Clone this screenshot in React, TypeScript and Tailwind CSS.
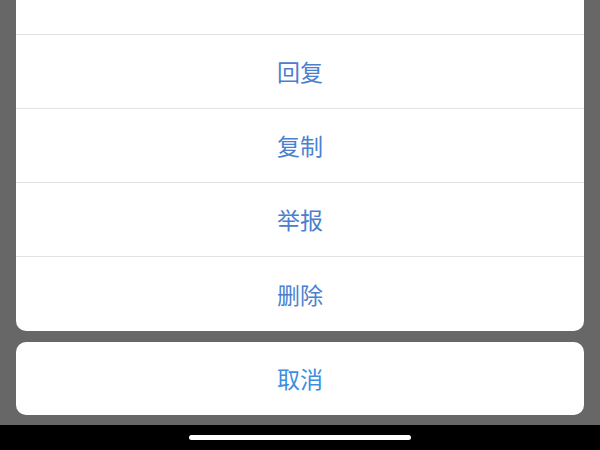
import React from "react";

const actions = ["回复", "复制", "举报", "删除"];

const ActionRow = ({ label, last }: { label: string; last?: boolean }) => {
  return (
    <button
      type="button"
      className={`flex items-center justify-center border-t border-[#e2e2e2] text-[23px] text-[#4a80cf] ${
        last ? "h-[75px]" : "h-[74px]"
      }`}
    >
      {label}
    </button>
  );
};

export default function App() {
  return (
    <div
      className="flex h-[450px] w-[600px] flex-col overflow-hidden bg-[#676767]"
      style={{ fontFamily: '"Noto Sans CJK SC", "Noto Sans", sans-serif' }}
    >
      <div className="flex flex-1 flex-col px-4">
        {/* action sheet, its first row scrolled past the top */}
        <div className="-mt-[40px] flex flex-col rounded-b-[10px] bg-white">
          <div className="h-[74px]" />
          {actions.map((a, i) => (
            <ActionRow key={a} label={a} last={i === actions.length - 1} />
          ))}
        </div>
        <button
          type="button"
          className="mt-[11px] flex h-[73px] items-center justify-center rounded-[10px] bg-white text-[23px] text-[#3d8de0]"
        >
          取消
        </button>
      </div>
      <div className="flex h-[25px] justify-center bg-black pt-[10px]">
        <div className="h-[5px] w-[222px] rounded-full bg-white" />
      </div>
    </div>
  );
}
